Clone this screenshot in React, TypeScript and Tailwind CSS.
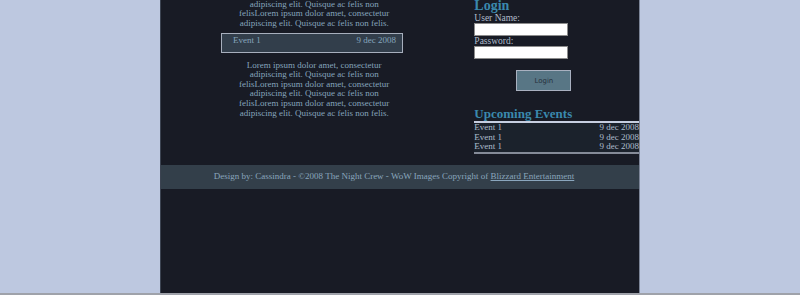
import React from 'react';

const lorem =
  'Lorem ipsum dolor amet, consectetur adipiscing elit. Quisque ac felis non felisLorem ipsum dolor amet, consectetur adipiscing elit. Quisque ac felis non felisLorem ipsum dolor amet, consectetur adipiscing elit. Quisque ac felis non felis.';

const upcoming = [
  { name: 'Event 1', date: '9 dec 2008' },
  { name: 'Event 1', date: '9 dec 2008' },
  { name: 'Event 1', date: '9 dec 2008' },
];

function Paragraph({ className = '' }: { className?: string }) {
  return (
    <p className={`mx-auto w-[156px] text-center text-[9px] leading-[9.6px] text-[#86a5bd] ${className}`}>
      {lorem}
    </p>
  );
}

export default function App() {
  return (
    <div
      className="flex h-[295px] flex-col overflow-hidden bg-[#bdc8e0]"
      style={{ fontFamily: '"Liberation Serif", "Times New Roman", serif' }}
    >
      <div className="mx-auto flex h-[293px] w-[480px] flex-col overflow-hidden border-l border-r border-l-[#3c4452] border-r-[#7c8598] bg-[#181b25]">
        <div className="flex gap-[7px]">
          {/* main column */}
          <div className="w-[307px]">
            <Paragraph className="-mt-[29px]" />

            <div className="ml-[60px] mt-[4px] flex h-[20px] w-[182px] justify-between border border-[#a7afbd] bg-[#323e4b] pl-[11px] pr-[6px] pt-[1px] text-[9px] leading-[10px] text-[#86a5bd]">
              <span>Event 1</span>
              <span>9 dec 2008</span>
            </div>

            <Paragraph className="mt-[8px]" />
          </div>

          {/* sidebar */}
          <div className="w-[165px]">
            <h2 className="-mt-[1px] text-[14px] font-bold leading-[14px] text-[#3a89ad]">Login</h2>
            <form className="flex flex-col text-[9.5px] leading-[10px] text-[#b0bccb]">
              <label>User Name:</label>
              <input className="h-[13px] w-[94px] border border-[#8c8c8c] bg-white" />
              <label>Password:</label>
              <input type="password" className="h-[13px] w-[94px] border border-[#8c8c8c] bg-white" />
              <button
                type="button"
                className="ml-[42px] mt-[11px] h-[21px] w-[55px] border border-[#a9b1c0] bg-[#587685] text-[7px] text-[#27323e]"
                style={{ fontFamily: '"DejaVu Sans", sans-serif' }}
              >
                Login
              </button>
            </form>

            <h2 className="mt-[16px] text-[13px] font-bold leading-[14px] text-[#3a89ad]">Upcoming Events</h2>
            <div className="border-t-2 border-b-2 border-t-[#c6cee0] border-b-[#858b98] text-[9px] leading-[9.5px] text-[#aebdcc]">
              {upcoming.map((e, i) => (
                <div key={i} className="flex justify-between bg-[#1b222c]">
                  <span>{e.name}</span>
                  <span>{e.date}</span>
                </div>
              ))}
            </div>
          </div>
        </div>

        <footer className="mt-[11px] flex h-[24px] items-center justify-center bg-[#333f4a] pr-[12px] text-[9px] text-[#8aa6bd]">
          <span>
            Design by: Cassindra - ©2008 The Night Crew - WoW Images Copyright of{' '}
            <a href="#" className="underline">Blizzard Entertainment</a>
          </span>
        </footer>
      </div>
      <div className="h-[2px] bg-[#9fa2aa]" />
    </div>
  );
}
